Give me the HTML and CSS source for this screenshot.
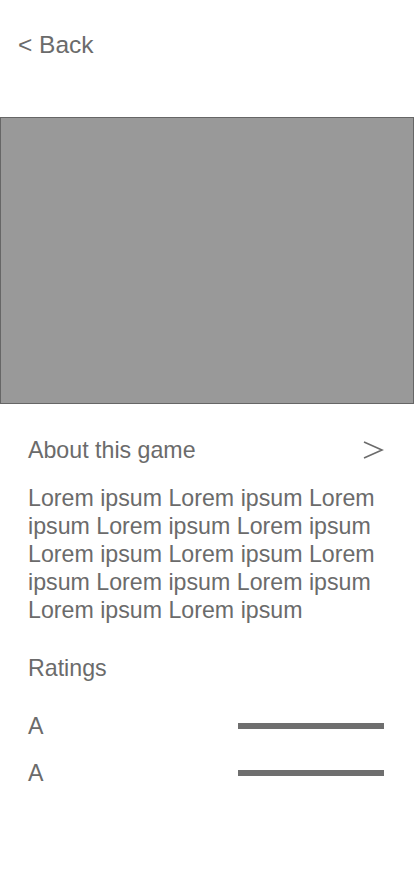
FILE: index.html
```html
<!DOCTYPE html>
<html>
<head>
<meta charset="utf-8">
<link rel="stylesheet" href="styles.css">
</head>
<body>
<header class="topbar"><span class="back">&lt; Back</span></header>
<div class="hero"></div>
<main class="content">
  <div class="about-row">
    <span class="about-title">About this game</span>
    <svg class="chev" width="22" height="22" viewBox="0 0 22 22"><polyline points="2,3 20,11 2,19" fill="none" stroke="#6b6b6b" stroke-width="1.6"/></svg>
  </div>
  <p class="desc">Lorem ipsum Lorem ipsum Lorem ipsum Lorem ipsum Lorem ipsum Lorem ipsum Lorem ipsum Lorem ipsum Lorem ipsum Lorem ipsum Lorem ipsum Lorem ipsum</p>
  <h2 class="ratings">Ratings</h2>
  <div class="rating-list">
    <div class="rating-row"><span>A</span><span class="bar"></span></div>
    <div class="rating-row"><span>A</span><span class="bar"></span></div>
  </div>
</main>
</body>
</html>
```
FILE: styles.css
```css
* { box-sizing: border-box; }
html, body { margin: 0; padding: 0; background: #fff; }
body {
  font-family: "Liberation Sans", Arial, sans-serif;
  color: #6b6b6b;
  font-size: 23.2px;
  line-height: 28px;
}
.topbar {
  height: 117px;
  padding: 31px 0 0 18px;
}
.back { font-size: 24.5px; }
.hero {
  height: 287px;
  background: #999999;
  border: 1px solid #666666;
}
.content {
  padding: 32px 30px 0 28px;
}
.about-row {
  display: flex;
  justify-content: space-between;
  align-items: center;
  height: 28px;
}
.desc {
  margin: 20px 0 0 0;
}
.ratings {
  margin: 30px 0 0 0;
  font-size: 23.2px;
  font-weight: normal;
  line-height: 28px;
}
.rating-list {
  display: flex;
  flex-direction: column;
  gap: 19px;
  margin-top: 30px;
}
.rating-row {
  display: flex;
  justify-content: space-between;
  align-items: center;
  height: 28px;
}
.bar {
  width: 146px;
  height: 6px;
  background: #6e6e6e;
}
```
